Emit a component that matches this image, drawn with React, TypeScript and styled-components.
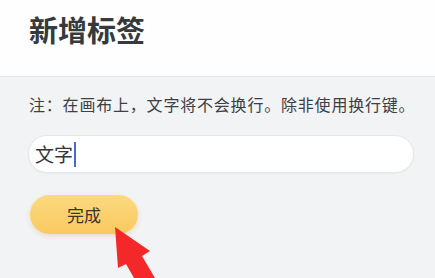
import React from "react";
import styled, { createGlobalStyle } from "styled-components";

const Global = createGlobalStyle`
  html, body { margin: 0; padding: 0; background: #f2f3f5; }
  body { font-family: "Noto Sans CJK SC", "Noto Sans", sans-serif; overflow: hidden; }
`;

const Page = styled.div`
  position: relative;
  width: 435px;
  height: 278px;
  overflow: hidden;
  background: #f2f3f5;
`;

const Header = styled.header`
  height: 77px;
  box-sizing: border-box;
  padding: 12px 0 0 29px;
  background: #fefefe;
  border-bottom: 1px solid #e4e5e7;
`;

const Title = styled.h1`
  margin: 0;
  font-size: 29px;
  line-height: 35px;
  font-weight: 700;
  color: #363a3c;
  letter-spacing: 0;
`;

const Body = styled.main`
  padding: 15px 21px 0 28px;
  display: flex;
  flex-direction: column;
  align-items: flex-start;
`;

const Note = styled.p`
  margin: 0 0 0 1px;
  font-size: 16px;
  line-height: 24px;
  letter-spacing: 0.8px;
  color: #3c4044;
  white-space: nowrap;
`;

const InputBox = styled.div`
  margin-top: 19px;
  width: 386px;
  height: 38px;
  box-sizing: border-box;
  border-radius: 19px;
  background: #ffffff;
  border: 1px solid #e6e7e9;
  box-shadow: 0 1px 2px rgba(0, 0, 0, 0.04);
  display: flex;
  align-items: center;
  padding-left: 6px;
`;

const InputText = styled.span`
  font-size: 19px;
  line-height: 24px;
  color: #33363a;
`;

const Caret = styled.span`
  display: inline-block;
  width: 2px;
  height: 25px;
  margin-left: 1px;
  background: #4b67d6;
`;

const DoneButton = styled.button`
  margin-top: 22px;
  margin-left: 2px;
  width: 108px;
  height: 39px;
  border: none;
  border-radius: 20px;
  background: linear-gradient(180deg, #fcd97f 0%, #f9c95f 100%);
  box-shadow: 0 2px 5px rgba(200, 160, 60, 0.25);
  font-family: "Noto Sans CJK SC", sans-serif;
  font-size: 17px;
  color: #3a3526;
  padding: 0;
  cursor: pointer;
`;

const Arrow = styled.svg`
  position: absolute;
  left: 0;
  top: 0;
  pointer-events: none;
`;

export default function App() {
  return (
    <Page>
      <Global />
      <Header>
        <Title>新增标签</Title>
      </Header>
      <Body>
        <Note>注：在画布上，文字将不会换行。除非使用换行键。</Note>
        <InputBox>
          <InputText>文字</InputText>
          <Caret />
        </InputBox>
        <DoneButton>完成</DoneButton>
      </Body>
      <Arrow width="435" height="278" viewBox="0 0 435 278">
        <polygon
          points="115,227 150,251 142,256 162,290 146,299 126,264 118,268"
          fill="#f42828"
        />
      </Arrow>
    </Page>
  );
}
